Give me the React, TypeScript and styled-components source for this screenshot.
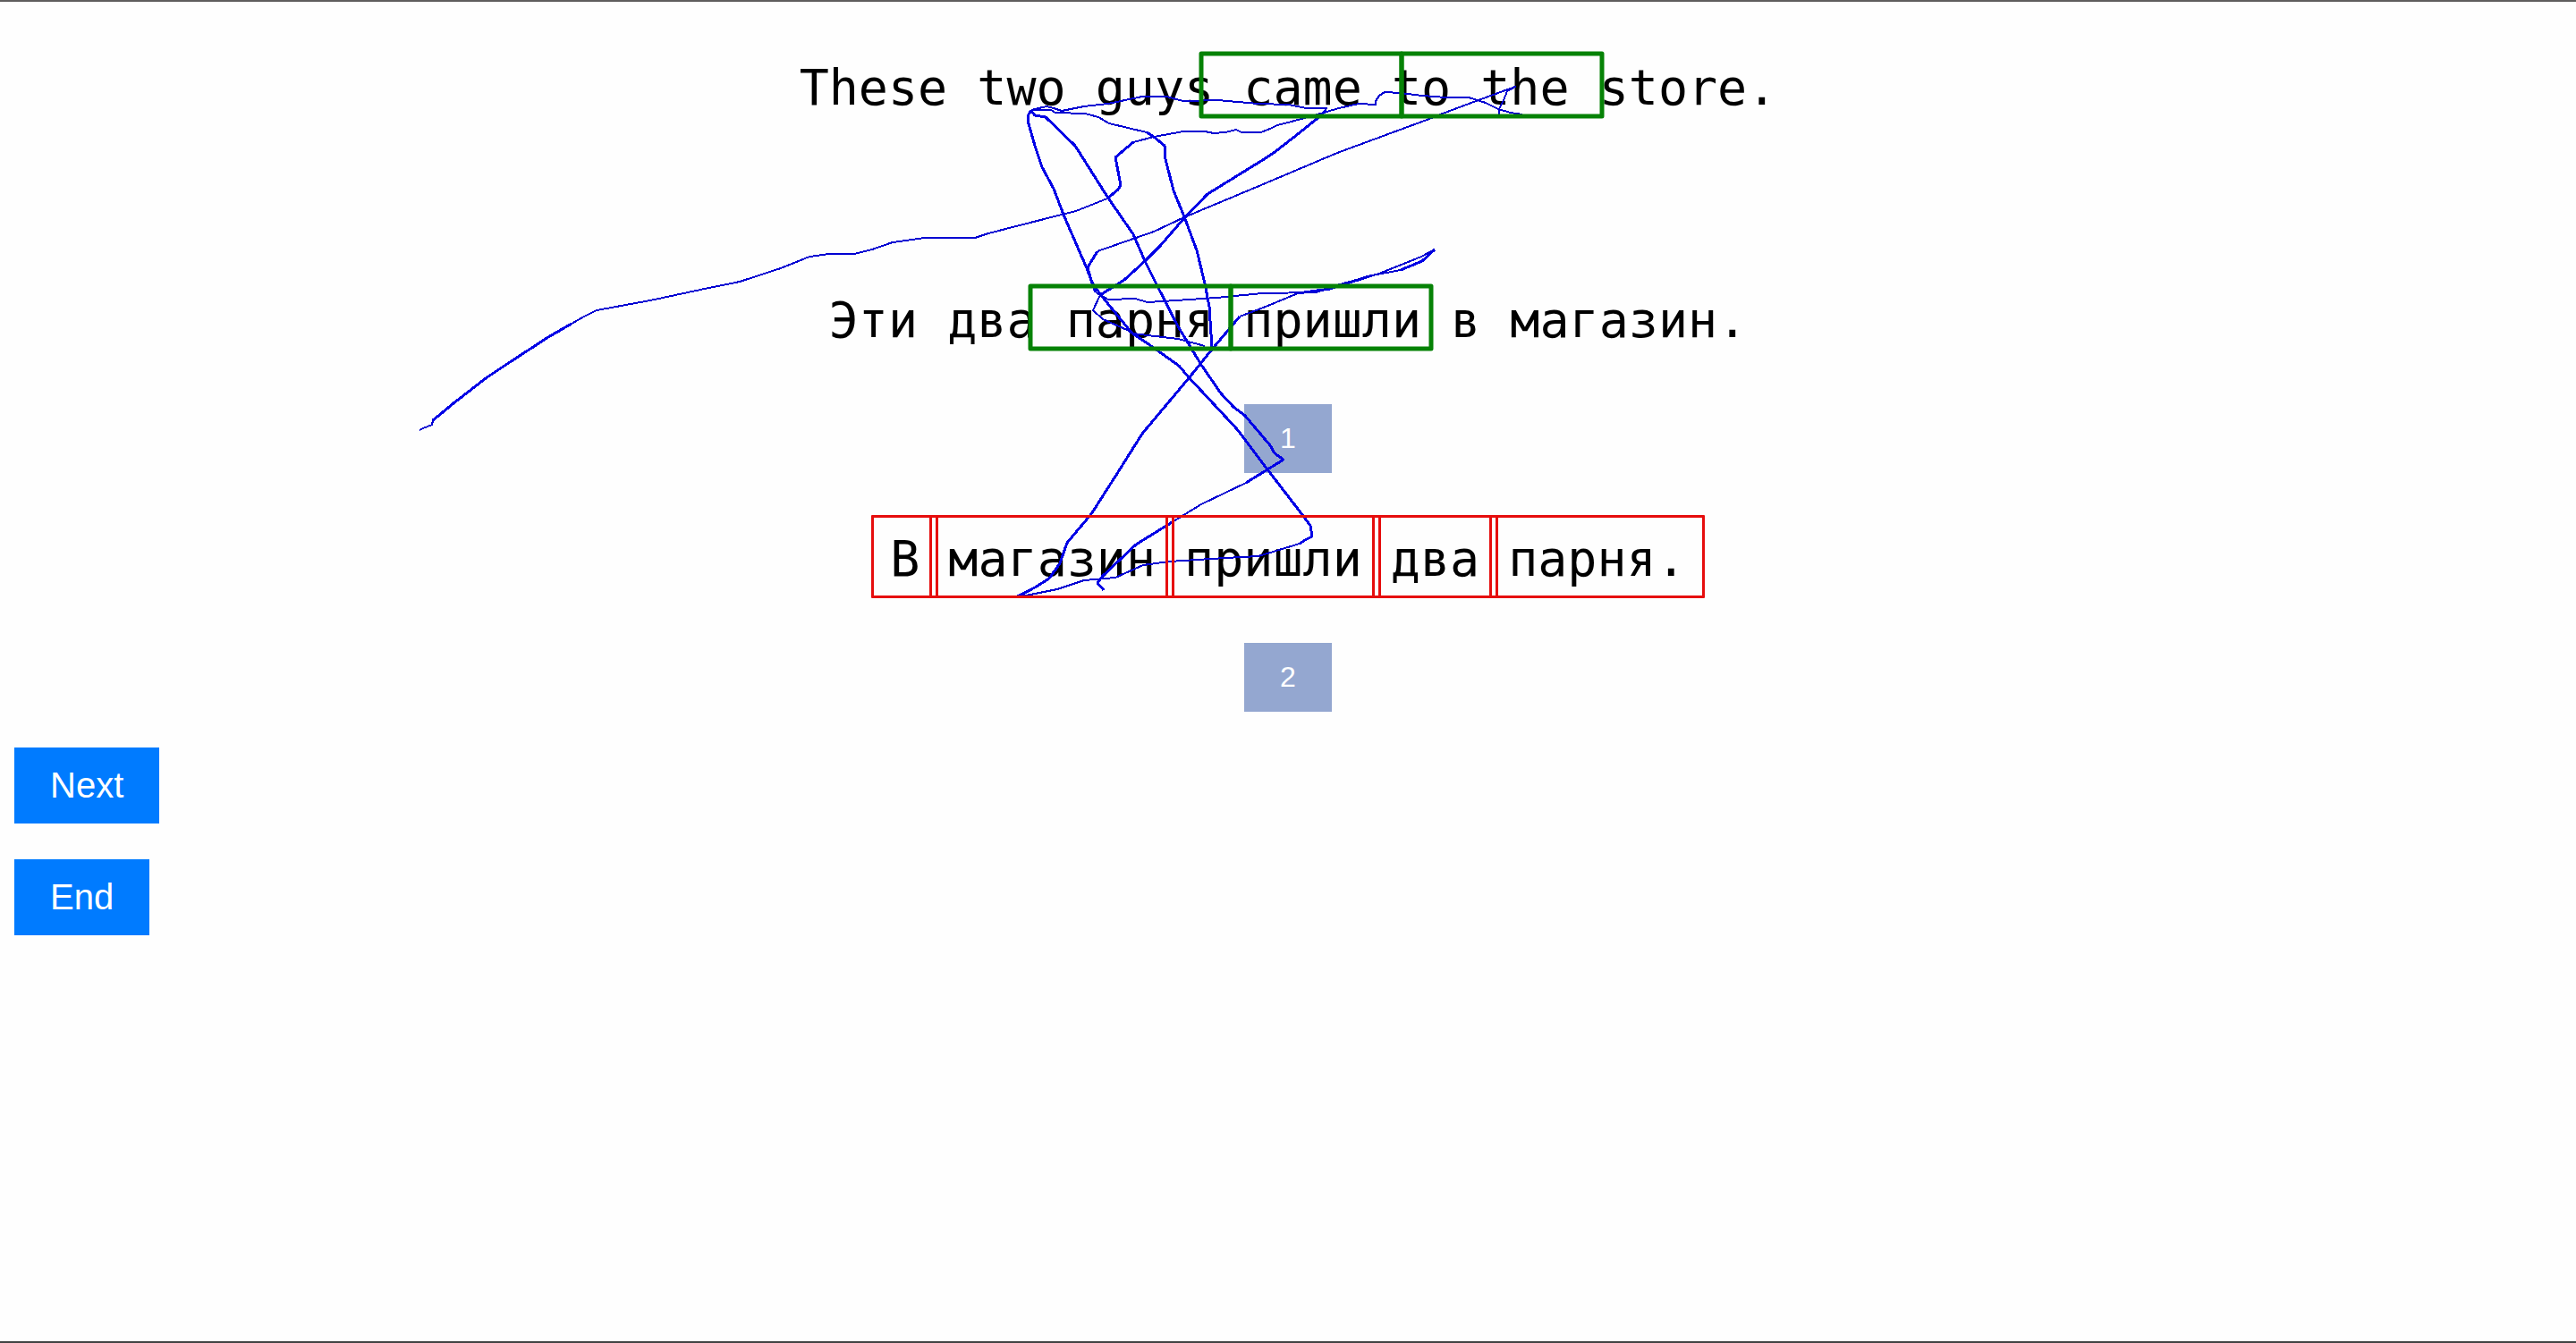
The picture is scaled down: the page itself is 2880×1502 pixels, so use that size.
import React from "react";
import styled, { createGlobalStyle } from "styled-components";

const GlobalStyle = createGlobalStyle`
  *, *::before, *::after {
    box-sizing: border-box;
  }
  body {
    margin: 0;
    background: #fefefe;
    color: #000;
    font-family: "Liberation Sans", Arial, sans-serif;
  }
`;

const Page = styled.main`
  position: relative;
  min-height: 100vh;
  padding: 58px 16px 40px;
  border-top: 2px solid #5f5d5d;
  border-bottom: 2px solid #414343;
  overflow: hidden;
`;

const Trial = styled.section`
  display: flex;
  flex-direction: column;
  align-items: center;
`;

const Sentence = styled.p`
  margin: 0;
  font: 55px/76px "DejaVu Sans Mono", monospace;
  white-space: nowrap;
`;

const Translation = styled(Sentence)`
  margin-top: 184px;
`;

const Words = styled.div`
  display: flex;
  margin: 47px 0 50px;
`;

/* Neighbouring frames overlap, so that the words stay one space apart. */
const Word = styled.span`
  position: relative;
  padding: 6px 21px 0;
  font: 55px/87px "DejaVu Sans Mono", monospace;
  white-space: nowrap;

  & + & {
    margin-left: -10px;
  }
  /* The frame is drawn above the gaze trace, the letters below it. */
  &::after {
    content: "";
    position: absolute;
    inset: 0;
    z-index: 2;
    border: 3px solid #e60d0d;
    border-radius: 1px;
  }
`;

const ChoiceButton = styled.button`
  padding: 20px 40px;
  border: 0;
  background: #94a7d0;
  color: #fff;
  font: 32px/37px "Liberation Sans", Arial, sans-serif;
`;

const FirstChoice = styled(ChoiceButton)`
  margin-top: 56px;
`;

const Controls = styled.nav`
  display: flex;
  flex-direction: column;
  align-items: flex-start;
  gap: 40px;
  margin-top: 40px;
`;

const ControlButton = styled.button`
  padding: 20px 40px;
  border: 0;
  background: #007bff;
  color: #fff;
  font: 40px/45px "Liberation Sans", Arial, sans-serif;
`;

/* Recorded gaze, kept centred on the sentences at any window width. */
const Overlay = styled.svg`
  position: absolute;
  top: -2px;
  left: 50%;
  z-index: 1;
  width: 1px;
  height: 1px;
  overflow: visible;
  pointer-events: none;
`;

const Trace = styled.polyline<{ $bold?: boolean }>`
  fill: none;
  stroke: ${(p) => (p.$bold ? "#0000e6" : "#0000d2")};
  stroke-width: ${(p) => (p.$bold ? 3 : 2)};
  stroke-linejoin: round;
  shape-rendering: crispEdges;
`;

const Area = styled.rect`
  fill: none;
  stroke: #068206;
  stroke-width: 5;
  stroke-linejoin: round;
`;

const traces: { bold?: boolean; points: string }[] = [
  { points: "469,481 473,479 483,475 484,470 495,461" },
  { bold: true, points: "484,470 495,461 507,451 520,441 543,423 567,407 590,392 613,377 639,362" },
  {
    points:
      "639,362 653,354 667,347 727,336 783,324 827,315 873,300 905,287 927,284 940,284 955,284 975,279 998,271 1013,269 1033,266 1062,266 1090,266 1105,261 1136,253 1187,240 1203,236 1223,228 1238,222",
  },
  { bold: true, points: "1238,222 1250,212 1253,207 1247,176 1267,159" },
  {
    points:
      "1267,159 1290,153 1323,147 1347,147 1357,149 1370,148 1382,145 1388,148 1410,148 1422,143 1428,140 1440,137 1455,133 1473,128 1483,125 1497,121 1519,116 1538,117 1538,113 1542,107 1548,103 1566,104 1590,107 1617,109 1642,109 1661,115 1675,122 1689,126 1702,128",
  },
  { points: "1676,130 1676,122 1681,112 1685,102 1694,97 1653,112 1610,128 1598,133 1495,171 1410,207 1324,243 1290,259 1227,281" },
  { bold: true, points: "1227,281 1216,299 1220,314 1230,329 1265,372 1287,387 1318,409 1329,422 1357,452 1383,480 1417,525 1457,577 1465,588 1467,600 1459,604 1453,608" },
  { points: "1453,608 1407,622 1370,624 1307,628 1278,632 1247,646 1212,649 1182,659 1147,666 1136,668" },
  { bold: true, points: "1136,668 1157,657 1173,647 1185,630 1193,607 1220,575 1250,528 1277,485 1329,423 1354,392 1386,354" },
  { points: "1386,354 1415,343 1451,328 1487,323" },
  { bold: true, points: "1451,328 1487,323 1534,308" },
  { points: "1534,308 1566,302 1590,292" },
  { bold: true, points: "1566,302 1590,292 1604,279" },
  { points: "1604,279 1589,287 1542,306 1498,318 1471,327 1411,328 1360,333 1300,337 1283,338 1269,334 1239,335 1225,327" },
  { bold: true, points: "1225,327 1215,300 1189,240 1178,211 1165,187 1157,163 1149,135 1150,128 1153,123" },
  { points: "1153,123 1170,119 1178,121 1187,124 1212,119 1239,116 1277,108 1304,108 1323,113 1361,112 1407,116 1440,117 1461,121 1483,121 1481,125 1472,133" },
  { bold: true, points: "1481,123 1481,125 1472,133 1451,150 1424,171 1410,180 1350,217 1323,245 1297,275 1280,292 1257,313 1230,330" },
  { points: "1230,330 1222,347 1233,357 1260,369 1267,373 1283,375 1317,379 1347,387" },
  { bold: true, points: "1355,389 1352,343 1347,317 1338,280 1325,245 1312,213 1303,178 1302,163 1290,153 1282,148" },
  { points: "1282,148 1240,138 1228,131 1213,127 1180,126 1175,123 1153,123" },
  { bold: true, points: "1153,124 1157,129 1169,131 1202,163 1238,220 1267,262 1280,292 1293,318 1317,365 1343,408 1365,440 1379,455 1392,465 1420,498 1425,507 1435,514 1393,540" },
  { points: "1393,540 1343,564 1312,583" },
  { bold: true, points: "1312,583 1270,609 1233,644 1227,652 1234,660" },
];

const areas = [
  { x: 1343, y: 60 },
  { x: 1567, y: 60 },
  { x: 1152, y: 320 },
  { x: 1376, y: 320 },
];

const words = ["В", "магазин", "пришли", "два", "парня."];

export default function App() {
  return (
    <>
      <GlobalStyle />
      <Page>
        <Trial>
          <Sentence lang="en">These two guys came to the store.</Sentence>
          <Translation lang="ru">Эти два парня пришли в магазин.</Translation>
          <FirstChoice type="button">1</FirstChoice>
          <Words lang="ru">
            {words.map((word) => (
              <Word key={word}>{word}</Word>
            ))}
          </Words>
          <ChoiceButton type="button">2</ChoiceButton>
        </Trial>
        <Controls>
          <ControlButton type="button">Next</ControlButton>
          <ControlButton type="button">End</ControlButton>
        </Controls>
        <Overlay aria-hidden="true">
          <g transform="translate(-1440 0)">
            {traces.map((trace) => (
              <Trace key={trace.points} $bold={trace.bold} points={trace.points} />
            ))}
            {areas.map((area) => (
              <Area key={`${area.x}-${area.y}`} x={area.x} y={area.y} width={224} height={70} />
            ))}
          </g>
        </Overlay>
      </Page>
    </>
  );
}
